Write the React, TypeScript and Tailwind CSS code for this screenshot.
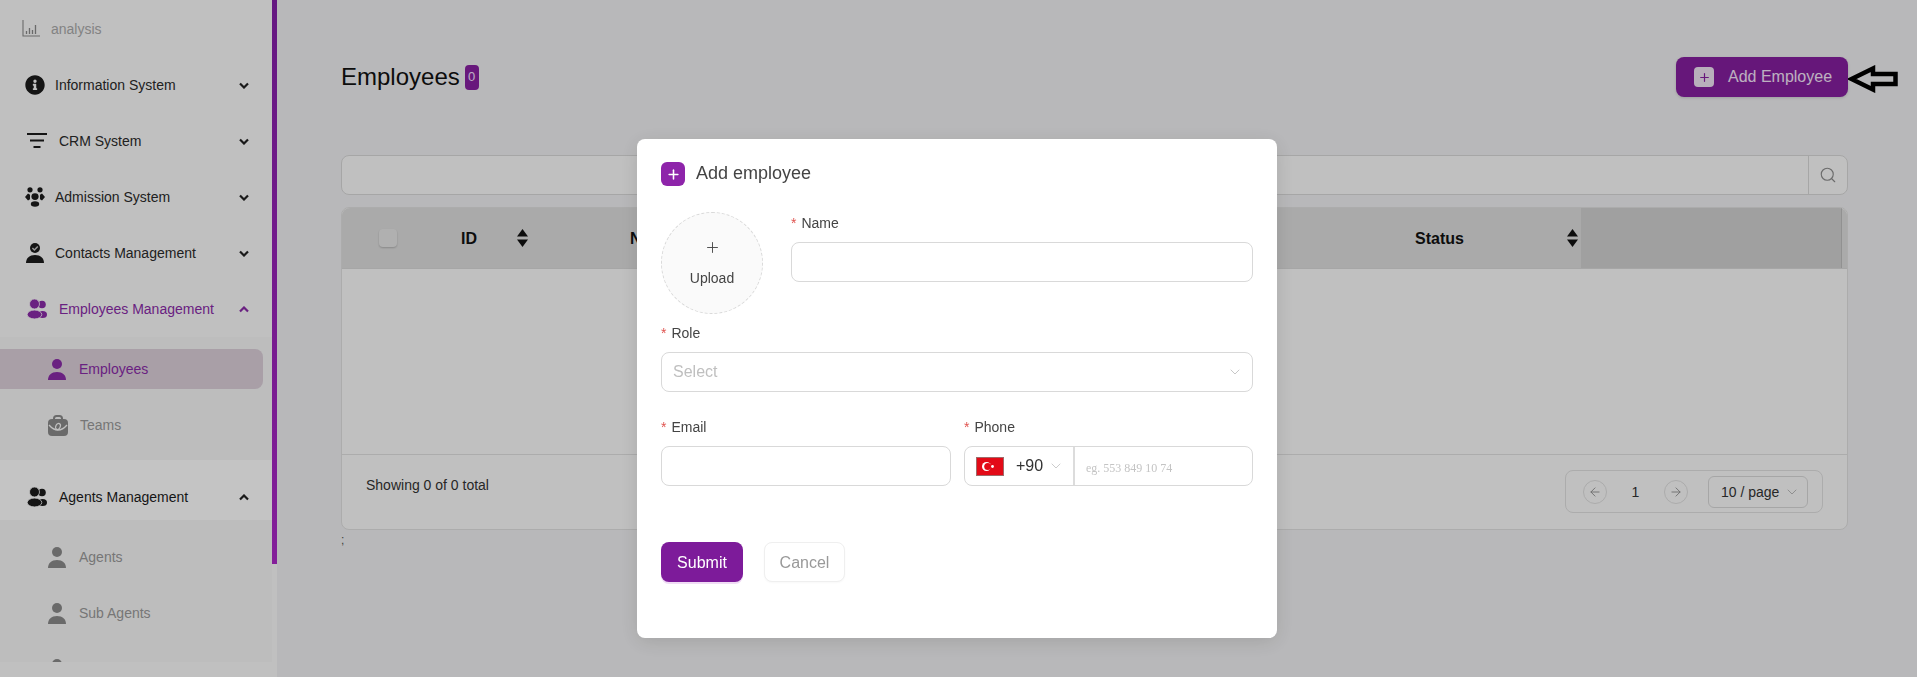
import React from "react";
import { FaInfoCircle } from "react-icons/fa";
import { Search, ArrowLeft, ArrowRight, ChevronDown, Plus } from "lucide-react";

const Chev = ({ up, color = "#222" }: { up?: boolean; color?: string }) => (
  <svg width="10" height="7" viewBox="0 0 10 7" fill="none" className="shrink-0">
    <polyline points={up ? "1,5.5 5,1.5 9,5.5" : "1,1.5 5,5.5 9,1.5"} stroke={color} strokeWidth="2.2" />
  </svg>
);

const Person = ({ color }: { color: string }) => (
  <svg width="18" height="21" viewBox="0 0 18 21" fill={color}>
    <circle cx="9" cy="5" r="5" />
    <path d="M0 21c0-5 3.5-8 9-8s9 3 9 8z" />
  </svg>
);

const Users = ({ color, bg }: { color: string; bg: string }) => (
  <svg width="20" height="20" viewBox="0 0 20 20" fill={color}>
    <circle cx="15" cy="5.500" r="3.800" />
    <ellipse cx="15.500" cy="15.500" rx="4.500" ry="3.500" />
    <circle cx="7.500" cy="5" r="5" stroke={bg} strokeWidth="0.8" />
    <ellipse cx="7.500" cy="15.500" rx="7.300" ry="4.400" stroke={bg} strokeWidth="0.8" />
  </svg>
);

const Contact = () => (
  <svg width="18" height="20" viewBox="0 0 18 20" fill="#1c1c1c">
    <circle cx="9" cy="5" r="5" />
    <polyline points="6.4,5 8.4,7 11.8,3.4" fill="none" stroke="#c4c4c4" strokeWidth="1.5" />
    <path d="M0 20c0-5 3.5-8 9-8s9 3 9 8z" />
  </svg>
);

const Admission = () => (
  <svg width="20" height="20" viewBox="0 0 20 20" fill="#1c1c1c">
    <circle cx="5" cy="2.8" r="2.6" />
    <circle cx="15" cy="2.8" r="2.6" />
    <ellipse cx="10" cy="9.6" rx="3.6" ry="3.4" />
    <ellipse cx="10" cy="17" rx="4.2" ry="2.8" />
    <path d="M0 10l3-3.4 2 1.2v4.4l-2 1.2z" />
    <path d="M20 10l-3-3.4-2 1.2v4.4l2 1.2z" />
  </svg>
);

const Analysis = () => (
  <svg width="18" height="17" viewBox="0 0 18 17" fill="none" stroke="#8a8a8a" strokeWidth="1.1">
    <path d="M1 0v16h17" />
    <path d="M4.5 14v-3M7.5 14v-6M10.5 14v-4M13.5 14V5" strokeWidth="1.3" />
  </svg>
);

const Team = () => (
  <svg width="20" height="21" viewBox="0 0 20 21">
    <path d="M6 5V3.5C6 2 7 1 8.5 1h3C13 1 14 2 14 3.5V5" fill="none" stroke="#8b8b8b" strokeWidth="2" />
    <rect x="0" y="4" width="20" height="17" rx="4" fill="#8b8b8b" />
    <path d="M1 10c3 3.5 6 5 9 5s6-1.500 9-5" fill="none" stroke="#fafafa" strokeWidth="1.3" />
    <ellipse cx="10" cy="11.500" rx="2.200" ry="3.200" fill="none" stroke="#fafafa" strokeWidth="1.200" transform="rotate(25 10 11.500)" />
  </svg>
);

const SortIcon = () => (
  <svg width="11" height="18" viewBox="0 0 11 18" fill="#111">
    <path d="M5.500 0L11 7.500H0z" />
    <path d="M5.500 18L11 10.500H0z" />
  </svg>
);

const Group = ({ icon, label, up, active, gap = "gap-[10px]", pad = "pl-[25px]" }: { icon: React.ReactNode; label: string; up?: boolean; active?: boolean; gap?: string; pad?: string }) => (
  <div className={`flex h-14 items-center pr-[23px] ${pad}`}>
    <div className={`flex flex-1 items-center ${gap}`}>
      {icon}
      <span className={`text-sm ${active ? "text-[#8a2ba8]" : "text-[#2b2b2b]"}`}>{label}</span>
    </div>
    <Chev up={up} color={active ? "#8a2ba8" : "#222"} />
  </div>
);

const Sub = ({ icon, label }: { icon: React.ReactNode; label: string }) => (
  <div className="flex h-14 items-center gap-[13px] pl-12">
    {icon}
    <span className="text-sm text-[#9a9a9a]">{label}</span>
  </div>
);

const Sidebar = () => (
  <aside className="flex h-[677px] w-[277px] shrink-0 bg-[#fafafa]">
    <div className="h-[662px] w-[272px] shrink-0 overflow-hidden">
      <div className="flex h-[57px] items-center gap-[11px] pl-[22px]">
        <Analysis />
        <span className="text-sm text-[#aaaaaa]">analysis</span>
      </div>
      <Group icon={<FaInfoCircle size={20} color="#1c1c1c" />} label="Information System" />
      <Group
        pad="pl-[27px]"
        gap="gap-3"
        icon={
          <svg width="20" height="16" viewBox="0 0 20 16" fill="#1c1c1c">
            <rect x="0" y="0" width="20" height="2" />
            <rect x="3" y="6.500" width="14" height="2" />
            <rect x="6.500" y="13" width="7" height="2" />
          </svg>
        }
        label="CRM System"
      />
      <Group icon={<Admission />} label="Admission System" />
      <Group pad="pl-[26px]" gap="gap-[11px]" icon={<Contact />} label="Contacts Management" />
      <Group pad="pl-[27px]" gap="gap-3" icon={<Users color="#8a2ba8" bg="#fafafa" />} label="Employees Management" up active />
      <div className="h-[123px] bg-[#f6f6f6] pt-3">
        <div className="flex h-10 w-[263px] items-center gap-[13px] rounded-r-lg bg-[#dccfda] pl-12">
          <Person color="#8a2ba8" />
          <span className="text-sm text-[#8a2ba8]">Employees</span>
        </div>
        <div className="mt-2 flex h-14 items-center gap-3 pl-12">
          <Team />
          <span className="text-sm text-[#9a9a9a]">Teams</span>
        </div>
      </div>
      <div className="flex h-[60px] items-center bg-white pl-[27px] pr-[23px] pt-[14px]">
        <div className="flex flex-1 items-center gap-3">
          <Users color="#1c1c1c" bg="#ffffff" />
          <span className="text-sm text-[#1c1c1c]">Agents Management</span>
        </div>
        <Chev up />
      </div>
      <div className="bg-[#f6f6f6] pt-[9px]">
        <Sub icon={<Person color="#8b8b8b" />} label="Agents" />
        <Sub icon={<Person color="#8b8b8b" />} label="Sub Agents" />
        <div className="flex h-14 items-center pl-12">
          <Person color="#8b8b8b" />
        </div>
      </div>
    </div>
    <div className="h-[564px] w-[5px] bg-gradient-to-b from-[#841fa8] to-[#ac27c8]" />
  </aside>
);

const Main = () => (
  <main className="min-w-0 flex-1 pl-16 pr-[69px] pt-[57px]">
    <div className="flex h-10 items-center justify-between">
      <div className="flex items-center gap-[5px]">
        <h1 className="text-2xl text-[#111]">Employees</h1>
        <span className="flex h-[25px] w-[14px] items-center justify-center rounded bg-[#8820a2] text-[13px] text-[#f5e0ff]">0</span>
      </div>
      <button className="flex h-10 w-[172px] items-center rounded-lg bg-[#851f9f] pl-[18px] text-base text-[#f5e6fa] shadow-[0_1px_3px_rgba(0,0,0,.15)]">
        <span className="flex h-5 w-5 items-center justify-center rounded bg-[#f0e4f4]">
          <Plus size={13} strokeWidth={2.200} color="#8820a2" />
        </span>
        <span className="ml-[14px]">Add Employee</span>
      </button>
    </div>

    <div className="mt-[58px] flex h-10 rounded-lg border border-[#d9d9d9] bg-[#fafafa]">
      <div className="flex-1" />
      <div className="flex w-[39px] items-center justify-center border-l border-[#d9d9d9]">
        <Search size={18} color="#8c8c8c" strokeWidth={1.500} />
      </div>
    </div>

    <div className="mt-3 h-[323px] rounded-lg border border-[#e0e0e0] bg-[#fafafa]">
      <div className="flex h-[60px] items-center overflow-hidden rounded-t-lg bg-[#dedede] text-base font-bold text-[#111] shadow-[0_1px_0_#d9d9d9]">
        <div className="w-[119px] pl-[37px]">
          <div className="h-[18px] w-[18px] rounded bg-[#e6e6e6] shadow-[0_1px_2px_rgba(0,0,0,.2)]" />
        </div>
        <div className="flex w-[169px] items-center gap-10">
          <span className="pt-px">ID</span>
          <SortIcon />
        </div>
        <div className="w-[785px] pt-px">Name</div>
        <div className="flex w-[166px] items-center">
          <span className="pt-px">Status</span>
          <span className="ml-[103px]">
            <SortIcon />
          </span>
        </div>
        <div className="h-full flex-1 border-r border-[#bdbdbd] bg-[#d1d1d1]" />
        <div className="w-[5px]" />
      </div>
      <div className="h-[187px] border-b border-[#e0e0e0]" />
      <div className="flex items-start justify-between pl-[24px] pr-6 pt-[15px]">
        <span className="pt-[5px] text-sm text-[#333]">Showing 0 of 0 total</span>
        <div className="flex h-[43px] w-[258px] items-center rounded-lg border border-[#e0e0e0] pl-[17px] text-sm text-[#333]">
          <span className="flex h-6 w-6 items-center justify-center rounded-full border border-[#e0e0e0]">
            <ArrowLeft size={14} color="#8c8c8c" strokeWidth={1.500} />
          </span>
          <span className="w-[57px] text-center">1</span>
          <span className="flex h-6 w-6 items-center justify-center rounded-full border border-[#e0e0e0]">
            <ArrowRight size={14} color="#8c8c8c" strokeWidth={1.500} />
          </span>
          <span className="ml-5 flex h-8 w-[100px] items-center gap-[5px] rounded-md border border-[#d9d9d9] pl-3">
            10 / page
            <ChevronDown size={16} color="#b0b0b0" strokeWidth={1.300} />
          </span>
        </div>
      </div>
    </div>
    <p className="mt-[2px] text-xs leading-4 text-[#555]">;</p>
  </main>
);

const Label = ({ children }: { children: React.ReactNode }) => (
  <label className="flex h-5 items-center text-sm text-[#444]">
    <span className="mr-[5px] text-[#e0534f]">*</span>
    {children}
  </label>
);

const Field = ({ className = "" }: { className?: string }) => (
  <div className={`mt-[9px] h-10 rounded-lg border border-[#d9d9d9] bg-white ${className}`} />
);

const Modal = () => (
  <div className="fixed inset-0 flex justify-center bg-black/[.23] pr-[3px] pt-[139px]">
    <div className="h-[499px] w-[640px] rounded-lg bg-white px-6 pt-[23px] shadow-[0_4px_20px_rgba(0,0,0,.12)]">
      <div className="flex h-6 items-center gap-[11px]">
        <span className="flex h-6 w-6 items-center justify-center rounded-md bg-[#8e24aa]">
          <Plus size={15} strokeWidth={2.500} color="#fff" />
        </span>
        <h2 className="pb-[2px] text-lg text-[#444]">Add employee</h2>
      </div>

      <div className="mt-[26px] flex gap-7">
        <div className="flex h-[102px] w-[102px] shrink-0 flex-col items-center justify-center rounded-full border border-dashed border-[#d9d9d9] bg-[#fafafa] text-sm text-[#444]">
          <Plus size={17} strokeWidth={1.300} color="#444" />
          <span className="mt-[12px]">Upload</span>
        </div>
        <div className="flex-1 pt-px">
          <Label>Name</Label>
          <Field />
        </div>
      </div>

      <div className="mt-[9px]">
        <Label>Role</Label>
        <div className="mt-[9px] flex h-10 items-center justify-between rounded-lg border border-[#d9d9d9] pl-[11px] pr-[9px] text-base text-[#bfbfbf]">
          Select
          <ChevronDown size={16} color="#bfbfbf" strokeWidth={1.300} />
        </div>
      </div>

      <div className="mt-[25px] flex gap-[13px]">
        <div className="w-[290px]">
          <Label>Email</Label>
          <Field />
        </div>
        <div className="flex-1">
          <Label>Phone</Label>
          <div className="mt-[9px] flex h-10 items-center rounded-lg border border-[#d9d9d9]">
            <div className="flex h-full w-[110px] shrink-0 items-center border-r-2 border-[#dcdcdc] pl-[11px] text-base text-[#333]">
              <svg width="28" height="19" viewBox="0 0 28 19" className="shrink-0">
                <rect width="28" height="19" fill="#a06a6a" />
                <rect x="1" y="1" width="26" height="17" fill="#e30a17" />
                <circle cx="10.500" cy="9.500" r="4.500" fill="#fff" />
                <circle cx="11.800" cy="9.500" r="3.600" fill="#e30a17" />
                <circle cx="16.500" cy="9.500" r="1.400" fill="#fff" />
              </svg>
              <span className="ml-[12px]">+90</span>
              <ChevronDown size={16} color="#bfbfbf" strokeWidth={1.200} className="ml-[5px]" />
            </div>
            <span className="pl-[11px] pt-[3px] font-['Liberation_Serif',serif] text-xs text-[#c4c4c4]">eg. 553 849 10 74</span>
          </div>
        </div>
      </div>

      <div className="mt-14 flex gap-[21px]">
        <button className="h-10 w-[82px] rounded-lg bg-[#7d1b9a] pt-px text-base text-white shadow-[0_2px_0_#f0dcf5]">Submit</button>
        <button className="h-10 w-[81px] rounded-lg border border-[#efefef] bg-white pt-px text-base text-[#999] shadow-[0_1px_2px_rgba(0,0,0,.03)]">Cancel</button>
      </div>
    </div>
  </div>
);

const Pointer = () => (
  <svg width="50" height="28" viewBox="0 0 50 28" fill="none" className="fixed left-[1848px] top-[65px]">
    <path d="M3.500 14L25 3.500V9H47.500V19H25V24.500Z" stroke="#000" strokeWidth="4.500" />
  </svg>
);

export default function App() {
  return (
    <div className="flex h-[677px] overflow-hidden bg-[#f0f0f2] font-['Liberation_Sans',Arial,sans-serif]">
      <Sidebar />
      <Main />
      <Modal />
      <Pointer />
    </div>
  );
}
